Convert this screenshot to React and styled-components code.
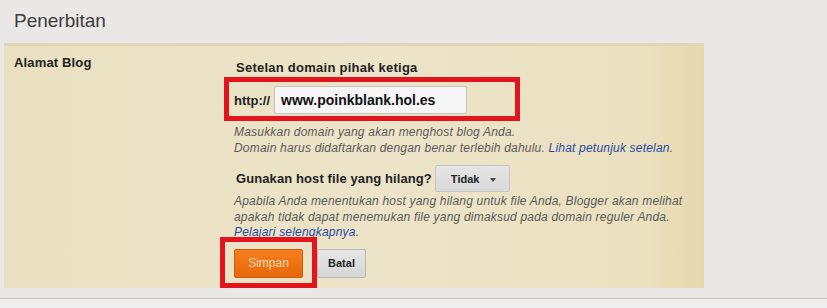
import React from "react";
import styled, { createGlobalStyle } from "styled-components";

const GlobalStyle = createGlobalStyle`
  html, body {
    margin: 0;
    padding: 0;
    background: #e9e8e6;
  }
  body {
    font-family: "Liberation Sans", Arial, sans-serif;
    color: #222;
  }
`;

const Page = styled.div`
  width: 827px;
  height: 308px;
  overflow: hidden;
  display: flex;
  flex-direction: column;
`;

const Title = styled.h1`
  margin: 0;
  padding: 10px 0 0 14px;
  height: 43px;
  box-sizing: border-box;
  font-size: 19px;
  font-weight: normal;
  line-height: 22px;
  color: #3d3d3d;
`;

const Panel = styled.div`
  margin-left: 4px;
  width: 700px;
  box-sizing: border-box;
  border-top: 3px solid #dfd6ba;
  background: linear-gradient(to right, #eae0c1 0%, #ede4c9 55%, #ebe0bf 92%, #e6d8ad 100%);
  display: grid;
  grid-template-columns: 230px 1fr;
  padding-bottom: 10px;
`;

const Label = styled.div`
  padding: 9px 0 0 10px;
  font-size: 13px;
  font-weight: bold;
  line-height: 16px;
  letter-spacing: 0.15px;
  color: #222;
`;

const Field = styled.div`
  padding-top: 14px;
  display: flex;
  flex-direction: column;
`;

const Heading = styled.div`
  font-size: 13px;
  font-weight: bold;
  line-height: 16px;
  letter-spacing: 0.25px;
  padding-left: 2px;
`;

const Row = styled.div`
  position: relative;
  display: flex;
  align-items: center;
  gap: ${(p) => p.gap || 4}px;
  margin-top: ${(p) => p.top || 0}px;
`;

const Prefix = styled.span`
  font-size: 13px;
  font-weight: bold;
`;

const Input = styled.div`
  width: 193px;
  height: 28px;
  box-sizing: border-box;
  border: 1px solid #c4c2bc;
  border-radius: 2px;
  background: #f6f6f6;
  padding-left: 6px;
  display: flex;
  align-items: center;
  font-size: 14px;
  font-weight: bold;
  color: #111;
`;

const Highlight = styled.div`
  position: absolute;
  left: ${(p) => p.x}px;
  top: ${(p) => p.y}px;
  width: ${(p) => p.w}px;
  height: ${(p) => p.h}px;
  box-sizing: border-box;
  border: 5px solid #e3141b;
  pointer-events: none;
`;

const Help = styled.div`
  margin-top: ${(p) => p.top || 0}px;
  font-size: 12px;
  font-style: italic;
  line-height: ${(p) => p.lh || 15.5}px;
  letter-spacing: 0.2px;
  color: #5a5a5a;
`;

const Link = styled.a`
  color: #1f4aa3;
  text-decoration: none;
`;

const Question = styled.span`
  font-size: 13px;
  font-weight: bold;
  letter-spacing: 0.1px;
  padding-left: 2px;
`;

const Dropdown = styled.div`
  width: 75px;
  height: 27px;
  box-sizing: border-box;
  border: 1px solid #c4c4c4;
  border-radius: 2px;
  background: linear-gradient(#e4e4e4, #d9d9d9);
  display: flex;
  align-items: center;
  padding-left: 15px;
  gap: 11px;
  font-size: 11px;
  font-weight: bold;
  color: #222;
`;

const Caret = styled.span`
  width: 0;
  height: 0;
  border-left: 3.5px solid transparent;
  border-right: 3.5px solid transparent;
  border-top: 4px solid #444;
  margin-top: 2px;
`;

const Button = styled.div`
  height: 29px;
  box-sizing: border-box;
  border-radius: 2px;
  display: flex;
  align-items: center;
  justify-content: center;
  width: ${(p) => (p.primary ? 69 : 49)}px;
  border: 1px solid ${(p) => (p.primary ? "#d35a08" : "#b9b9b9")};
  background: ${(p) =>
    p.primary
      ? "linear-gradient(#f47f1f, #e8680c)"
      : "linear-gradient(#e6e6e6, #d6d6d6)"};
  color: ${(p) => (p.primary ? "#fcd9b8" : "#222")};
  font-size: ${(p) => (p.primary ? 12 : 11)}px;
  font-weight: ${(p) => (p.primary ? "normal" : "bold")};
`;

const Rule = styled.div`
  margin-top: 10px;
  height: 1px;
  background: #c8c8c8;
`;

const Footer = styled.div`
  flex: 1;
  background: #efefef;
`;

export default function App() {
  return (
    <>
      <GlobalStyle />
      <Page>
        <Title>Penerbitan</Title>
        <Panel>
          <Label>Alamat Blog</Label>
          <Field>
            <Heading>Setelan domain pihak ketiga</Heading>
            <Row top={10}>
              <Prefix>http://</Prefix>
              <Input>www.poinkblank.hol.es</Input>
              <Highlight x={-10} y={-9} w={296} h={44} />
            </Row>
            <Help top={10} lh={16}>
              Masukkan domain yang akan menghost blog Anda.
              <br />
              Domain harus didaftarkan dengan benar terlebih dahulu.{" "}
              <Link href="#">Lihat petunjuk setelan</Link>.
            </Help>
            <Row top={9} gap={3}>
              <Question>Gunakan host file yang hilang?</Question>
              <Dropdown>
                Tidak
                <Caret />
              </Dropdown>
            </Row>
            <Help top={2}>
              Apabila Anda menentukan host yang hilang untuk file Anda, Blogger akan melihat
              <br />
              apakah tidak dapat menemukan file yang dimaksud pada domain reguler Anda.
              <br />
              <Link href="#">Pelajari selengkapnya</Link>.
            </Help>
            <Row top={8} gap={14}>
              <Button primary>Simpan</Button>
              <Button>Batal</Button>
              <Highlight x={-14} y={-12} w={97} h={51} />
            </Row>
          </Field>
        </Panel>
        <Rule />
        <Footer />
      </Page>
    </>
  );
}
